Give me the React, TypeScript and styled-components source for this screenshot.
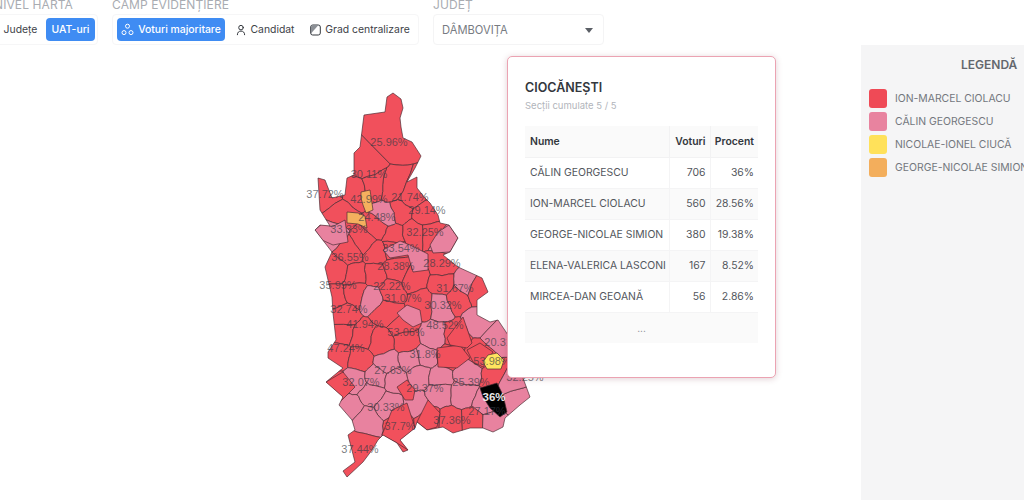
import React from "react";
import styled, { createGlobalStyle } from "styled-components";

const Global = createGlobalStyle`
  html, body { margin: 0; padding: 0; background: #fff; }
  body { font-family: Inter, "Liberation Sans", sans-serif; overflow: hidden; }
`;

const Page = styled.div`
  width: 1024px;
  height: 500px;
  overflow: hidden;
  display: flex;
  flex-direction: column;
`;
const Toolbar = styled.div`
  display: flex;
  align-items: flex-start;
  gap: 14px;
  height: 45px;
  margin-left: -6px;
  flex: none;
`;
const Field = styled.div`
  display: flex;
  flex-direction: column;
`;
const FieldLabel = styled.div`
  height: 14px;
  line-height: 10px;
  font-size: 12px;
  letter-spacing: 0.1px;
  color: #a9acb2;
  white-space: nowrap;
`;
const Group = styled.div<{ $pad: string }>`
  display: flex;
  align-items: center;
  height: 31px;
  box-sizing: border-box;
  padding: ${(p) => p.$pad};
  border: 1px solid #f6f6f7;
  border-radius: 4px;
  background: #fff;
`;
const Option = styled.div<{ $active?: boolean; $w: number }>`
  display: flex;
  align-items: center;
  justify-content: center;
  gap: 4px;
  width: ${(p) => p.$w}px;
  height: 23px;
  border-radius: 4px;
  font-size: 10.4px;
  font-weight: ${(p) => (p.$active ? 500 : 400)};
  white-space: nowrap;
  color: ${(p) => (p.$active ? "#fff" : "#3d4248")};
  background: ${(p) => (p.$active ? "#3f8cf3" : "transparent")};
`;
const Select = styled.div`
  display: flex;
  align-items: center;
  justify-content: space-between;
  width: 171px;
  height: 31px;
  box-sizing: border-box;
  padding: 0 10px 0 8px;
  font-size: 11.2px;
  color: #777b82;
  border: 1px solid #f4f4f5;
  border-radius: 4px;
`;
const Caret = styled.span`
  width: 0;
  height: 0;
  border-left: 4.5px solid transparent;
  border-right: 4.5px solid transparent;
  border-top: 5px solid #5b5f66;
  margin-top: 1px;
`;
const Body = styled.div`
  display: flex;
  flex: 1;
  min-height: 0;
`;
const Stage = styled.div`
  position: relative;
  width: 861px;
  flex: none;
  padding: 45px 0 0 300px;
  box-sizing: border-box;
`;
const MapSvg = styled.svg`
  display: block;
`;
const Region = styled.path`
  stroke: #4a2b33;
  stroke-width: 0.8;
  stroke-opacity: 0.85;
  stroke-linejoin: round;
`;
const MapLabel = styled.text<{ $strong?: boolean }>`
  font-family: "Liberation Sans", Arial, sans-serif;
  font-size: ${(p) => (p.$strong ? 11.5 : 11)}px;
  font-weight: ${(p) => (p.$strong ? 700 : 400)};
  fill: ${(p) => (p.$strong ? "#e8e8e8" : "#333a44")};
  fill-opacity: ${(p) => (p.$strong ? 1 : 0.68)};
  text-anchor: middle;
  dominant-baseline: central;
`;
const Popup = styled.div`
  position: absolute;
  left: 507px;
  top: 11px;
  width: 269px;
  height: 322px;
  box-sizing: border-box;
  padding: 23px 17px 0 17px;
  background: #fff;
  border: 1px solid #eba3b2;
  border-radius: 5px;
  box-shadow: 0 1px 6px rgba(120, 40, 60, 0.22);
`;
const PopupTitle = styled.div`
  font-size: 12.5px;
  line-height: 16px;
  font-weight: 600;
  color: #33373d;
`;
const PopupSub = styled.div`
  margin-top: 4px;
  font-size: 9.5px;
  line-height: 12px;
  color: #b2b5bb;
`;
const Table = styled.table`
  margin-top: 14px;
  width: 233px;
  border-collapse: collapse;
  table-layout: fixed;
  font-size: 10.4px;
  color: #52565c;
`;
const Row = styled.tr<{ $shade?: boolean }>`
  height: 31px;
  background: ${(p) => (p.$shade ? "#fafafa" : "#fff")};
`;
const Head = styled.th<{ $left?: boolean; $w: number }>`
  box-sizing: border-box;
  width: ${(p) => p.$w}px;
  padding: 0 4px;
  font-weight: 600;
  color: #33373d;
  text-align: ${(p) => (p.$left ? "left" : "right")};
  border-bottom: 1px solid #f2f2f3;
  border-right: 1px solid #f2f2f3;
  background: #fafafa;
  &:first-child { padding-left: 5px; }
  &:last-child { border-right: 0; }
`;
const Cell = styled.td<{ $num?: boolean }>`
  box-sizing: border-box;
  padding: 0 4px;
  white-space: nowrap;
  overflow: hidden;
  text-align: ${(p) => (p.$num ? "right" : "left")};
  border-bottom: 1px solid #f4f4f5;
  border-right: 1px solid #f4f4f5;
  &:first-child { padding-left: 5px; }
  &:last-child { border-right: 0; }
`;
const More = styled.td`
  text-align: center;
  color: #8a8d93;
  font-size: 10px;
`;
const Legend = styled.aside`
  width: 190px;
  flex: none;
  background: #f5f5f6;
  padding: 12px 0 0 8px;
  box-sizing: border-box;
  white-space: nowrap;
`;
const LegendTitle = styled.div`
  font-size: 12px;
  line-height: 15px;
  font-weight: 600;
  color: #63676d;
  padding-left: 92px;
  margin-bottom: 15px;
`;
const LegendRow = styled.div`
  display: flex;
  align-items: center;
  gap: 8px;
  height: 23px;
  font-size: 10.4px;
  color: #73777d;
`;
const Swatch = styled.span<{ $c: string }>`
  width: 18px;
  height: 19px;
  border-radius: 3px;
  flex: none;
  background: ${(p) => p.$c};
`;

const R = "#f1505c";
const P = "#e8829f";
const Y = "#ffe45f";
const O = "#f4b05e";

type Pt = [number, number];

const OUTLINE: Pt[] = [
  [387, 97], [393, 93], [401, 99], [403, 108], [400, 118], [401, 127], [403, 138], [412, 142], [421, 156],
  [415, 168], [407, 182], [417, 177], [417, 188], [425, 198], [430, 203], [438, 215], [440, 223], [449, 225],
  [458, 238], [450, 252], [443, 255], [458, 267], [482, 278], [488, 292], [477, 300], [477, 315], [490, 322],
  [498, 320], [510, 338], [520, 370], [530, 397], [520, 405], [505, 418], [503, 427], [493, 432], [483, 428],
  [470, 428], [453, 433], [443, 427], [427, 430], [417, 422], [415, 428], [400, 440], [408, 450], [403, 452],
  [397, 443], [383, 435], [378, 440], [372, 450], [363, 462], [347, 477], [343, 471], [355, 462], [348, 435],
  [355, 430], [352, 420], [339, 405], [343, 397], [326, 382], [343, 368], [328, 358], [328, 352], [336, 340],
  [333, 313], [332, 297], [325, 267], [332, 252], [315, 230], [320, 225], [330, 226], [320, 210], [318, 178],
  [325, 180], [332, 198], [345, 195], [347, 178], [354, 175], [354, 153], [360, 147], [364, 115], [385, 112],
];

const SEEDS: [number, number, string][] = [
  [392, 140, R], [366, 165, R], [356, 192, R], [328, 196, R], [340, 214, R], [392, 188, R], [375, 185, R],
  [410, 196, R], [400, 212, R], [425, 215, R], [378, 228, R], [393, 235, R], [415, 232, R], [430, 232, R],
  [445, 243, P], [331, 234, P], [386, 216, P], [365, 242, R], [350, 252, R], [376, 252, R], [393, 248, R],
  [441, 264, R], [335, 270, R], [356, 276, R], [375, 276, R], [396, 270, R],
  [415, 278, R], [442, 285, R], [466, 285, P], [334, 297, R], [357, 292, R], [372, 297, P], [390, 291, R],
  [387, 311, R], [423, 303, R], [440, 304, P], [457, 297, R], [477, 290, R], [343, 317, R],
  [342, 331, R], [363, 337, R], [380, 343, R], [407, 340, R], [403, 326, R], [433, 337, P], [457, 337, R],
  [450, 357, R], [480, 323, P], [480, 353, R], [495, 337, P], [338, 357, R], [360, 360, R], [425, 357, P],
  [412, 360, P], [387, 363, P], [355, 380, P], [337, 385, R], [377, 377, P], [395, 380, P],
  [420, 375, P], [440, 377, P], [467, 373, P], [495, 378, R], [350, 408, P], [372, 393, P], [388, 405, P],
  [418, 405, P], [440, 393, P], [463, 393, P], [487, 403, P], [513, 400, P], [400, 423, R], [428, 420, R],
  [450, 422, R], [473, 422, R], [493, 422, P], [367, 420, P], [360, 445, R], [507, 384, P],
];

const clipHalf = (poly: Pt[], a: Pt, b: Pt): Pt[] => {
  const mx = (a[0] + b[0]) / 2;
  const my = (a[1] + b[1]) / 2;
  const nx = b[0] - a[0];
  const ny = b[1] - a[1];
  const side = (p: Pt) => (p[0] - mx) * nx + (p[1] - my) * ny;
  const out: Pt[] = [];
  poly.forEach((p, i) => {
    const q = poly[(i + 1) % poly.length];
    const sp = side(p);
    const sq = side(q);
    if (sp <= 0) out.push(p);
    if (sp < 0 !== sq < 0) {
      const t = sp / (sp - sq);
      out.push([p[0] + (q[0] - p[0]) * t, p[1] + (q[1] - p[1]) * t]);
    }
  });
  return out;
};

const noise = (x: number, y: number) => {
  const v = Math.sin(x * 12.9898 + y * 78.233) * 43758.5453;
  return v - Math.floor(v) - 0.5;
};

const rough = (a: Pt, b: Pt, depth: number): Pt[] => {
  const len = Math.hypot(b[0] - a[0], b[1] - a[1]);
  if (depth === 0 || len < 3) return [a];
  const cx = Math.round(((a[0] + b[0]) / 2) * 2) / 2;
  const cy = Math.round(((a[1] + b[1]) / 2) * 2) / 2;
  const k = Math.min(len * 0.22, 3);
  const m: Pt = [(a[0] + b[0]) / 2 + noise(cx, cy) * k, (a[1] + b[1]) / 2 + noise(cy, cx) * k];
  return [...rough(a, m, depth - 1), ...rough(m, b, depth - 1)];
};

const toPath = (pts: Pt[]) =>
  "M" + pts.map((p) => `${p[0].toFixed(1)} ${p[1].toFixed(1)}`).join("L") + "Z";

const CELLS = SEEDS.map(([x, y, c]) => {
  let poly: Pt[] = [[290, 80], [550, 80], [550, 490], [290, 490]];
  SEEDS.forEach(([ox, oy]) => {
    if (ox !== x || oy !== y) poly = clipHalf(poly, [x, y], [ox, oy]);
  });
  const pts = poly.flatMap((p, i) => rough(p, poly[(i + 1) % poly.length], 2));
  return { d: toPath(pts), c };
});

const OVERLAYS: { pts: Pt[]; c: string }[] = [
  { pts: [[315, 230], [323, 223], [332, 227], [345, 220], [348, 242], [333, 245], [322, 240]], c: P },
  { pts: [[430, 245], [438, 232], [449, 225], [458, 238], [450, 252], [433, 253]], c: P },
  { pts: [[383, 250], [400, 241], [410, 245], [428, 254], [428, 270], [413, 272], [408, 255], [390, 258]], c: P },
  { pts: [[397, 313], [407, 305], [420, 310], [422, 323], [413, 327], [403, 320]], c: P },
  { pts: [[437, 348], [460, 345], [470, 358], [457, 368], [438, 367]], c: R },
  { pts: [[447, 338], [463, 317], [472, 343], [467, 348], [450, 345]], c: R },
  { pts: [[467, 350], [480, 343], [493, 352], [483, 367], [473, 362]], c: R },
  { pts: [[326, 382], [343, 372], [355, 387], [345, 397], [339, 403]], c: R },
  { pts: [[397, 387], [407, 380], [415, 390], [413, 400], [405, 400]], c: R },
  { pts: [[392, 410], [407, 403], [415, 428], [408, 450], [397, 443], [382, 435]], c: R },
  { pts: [[417, 422], [428, 400], [440, 413], [437, 427], [427, 430]], c: R },
  { pts: [[361, 192], [370, 190], [373, 210], [366, 213], [363, 205], [361, 198]], c: O },
  { pts: [[347, 212], [358, 213], [365, 216], [367, 228], [358, 224], [347, 223]], c: O },
  { pts: [[483, 362], [488, 355], [497, 353], [504, 360], [501, 369], [487, 369]], c: Y },
  { pts: [[480, 388], [497, 383], [503, 395], [507, 412], [500, 417], [490, 408], [483, 397]], c: "#000" },
];

const LABELS: [string, number, number][] = [
  ["25.96%", 389, 142], ["30.11%", 369, 174], ["37.72%", 325, 194], ["42.99%", 369, 199], ["21.74%", 410, 197],
  ["24.48%", 377, 217], ["29.14%", 427, 210], ["33.33%", 349, 229], ["32.25%", 425, 232], ["33.54%", 401, 248],
  ["28.29%", 442, 263], ["36.55%", 350, 257], ["28.38%", 396, 266], ["35.99%", 338, 285], ["22.22%", 392, 286],
  ["31.67%", 455, 288], ["31.07%", 403, 298], ["30.32%", 443, 305], ["32.74%", 349, 309], ["41.94%", 365, 324],
  ["53.06%", 406, 332], ["48.52%", 445, 325], ["47.24%", 346, 348], ["31.8%", 425, 354], ["20.31%", 503, 342],
  ["27.63%", 393, 370], ["53.98%", 492, 361], ["32.07%", 361, 382], ["29.37%", 425, 388], ["25.39%", 471, 382],
  ["32.25%", 525, 377], ["30.33%", 386, 407], ["27.17%", 487, 411], ["37.7%", 400, 426], ["37.36%", 452, 420],
  ["37.44%", 360, 449],
];

const ROWS: [string, string, string][] = [
  ["CĂLIN GEORGESCU", "706", "36%"],
  ["ION-MARCEL CIOLACU", "560", "28.56%"],
  ["GEORGE-NICOLAE SIMION", "380", "19.38%"],
  ["ELENA-VALERICA LASCONI", "167", "8.52%"],
  ["MIRCEA-DAN GEOANĂ", "56", "2.86%"],
];

const LEGEND: [string, string][] = [
  ["ION-MARCEL CIOLACU", "#ef4a56"],
  ["CĂLIN GEORGESCU", "#e8839f"],
  ["NICOLAE-IONEL CIUCĂ", "#ffe15a"],
  ["GEORGE-NICOLAE SIMION", "#f3ae5c"],
];

const NodesIcon = () => (
  <svg width="13" height="13" viewBox="0 0 13 13" fill="none" stroke="#fff" strokeWidth="1">
    <circle cx="6.5" cy="3.2" r="2" />
    <circle cx="3" cy="9.6" r="2" />
    <circle cx="10" cy="9.6" r="2" />
  </svg>
);
const PersonIcon = () => (
  <svg width="10" height="12" viewBox="0 0 11 12" fill="none" stroke="#33373d" strokeWidth="1.1" strokeLinecap="round">
    <circle cx="5.5" cy="3.4" r="2.5" />
    <path d="M1.5 11.2c0-2.6 1.6-4 4-4s4 1.4 4 4" />
  </svg>
);
const GradeIcon = () => (
  <svg width="11" height="12" viewBox="0 0 11 12" fill="none" stroke="#33373d" strokeWidth="1">
    <rect x="0.7" y="1" width="9.6" height="10" rx="2" />
    <path d="M1 9.5V3a2 2 0 0 1 2-2h5.5z" fill="#8b8f95" stroke="none" />
  </svg>
);

export default function App() {
  return (
    <Page>
      <Global />
      <Toolbar>
        <Field>
          <FieldLabel>NIVEL HARTĂ</FieldLabel>
          <Group $pad="0 2px 0 0">
            <Option $w={51}>Județe</Option>
            <Option $w={49} $active>UAT-uri</Option>
          </Group>
        </Field>
        <Field>
          <FieldLabel>CÂMP EVIDENȚIERE</FieldLabel>
          <Group $pad="0 4px">
            <Option $w={108} $active><NodesIcon />Voturi majoritare</Option>
            <Option $w={81}><PersonIcon />Candidat</Option>
            <Option $w={108}><GradeIcon />Grad centralizare</Option>
          </Group>
        </Field>
        <Field>
          <FieldLabel>JUDEȚ</FieldLabel>
          <Select>DÂMBOVIȚA<Caret /></Select>
        </Field>
      </Toolbar>
      <Body>
        <Stage>
          <MapSvg width="260" height="400" viewBox="300 90 260 400">
            <defs>
              <clipPath id="county"><path d={toPath(OUTLINE)} /></clipPath>
            </defs>
            <g clipPath="url(#county)">
              {CELLS.map((cell, i) => (
                <Region key={i} d={cell.d} fill={cell.c} />
              ))}
              {OVERLAYS.map((o, i) => (
                <Region key={i} d={toPath(o.pts)} fill={o.c} />
              ))}
            </g>
            <Region d={toPath(OUTLINE)} fill="none" />
            {LABELS.map(([t, x, y], i) => (
              <MapLabel key={i} x={x} y={y}>{t}</MapLabel>
            ))}
            <MapLabel $strong x={494} y={397}>36%</MapLabel>
          </MapSvg>
          <Popup>
            <PopupTitle>CIOCĂNEȘTI</PopupTitle>
            <PopupSub>Secții cumulate 5 / 5</PopupSub>
            <Table>
              <thead>
                <Row $shade>
                  <Head $left $w={144}>Nume</Head>
                  <Head $w={41}>Voturi</Head>
                  <Head $w={48}>Procent</Head>
                </Row>
              </thead>
              <tbody>
                {ROWS.map(([n, v, pc], i) => (
                  <Row key={n} $shade={i % 2 === 1}>
                    <Cell>{n}</Cell>
                    <Cell $num>{v}</Cell>
                    <Cell $num>{pc}</Cell>
                  </Row>
                ))}
                <Row $shade>
                  <More colSpan={3}>...</More>
                </Row>
              </tbody>
            </Table>
          </Popup>
        </Stage>
        <Legend>
          <LegendTitle>LEGENDĂ</LegendTitle>
          {LEGEND.map(([n, c]) => (
            <LegendRow key={n}>
              <Swatch $c={c} />
              {n}
            </LegendRow>
          ))}
        </Legend>
      </Body>
    </Page>
  );
}
